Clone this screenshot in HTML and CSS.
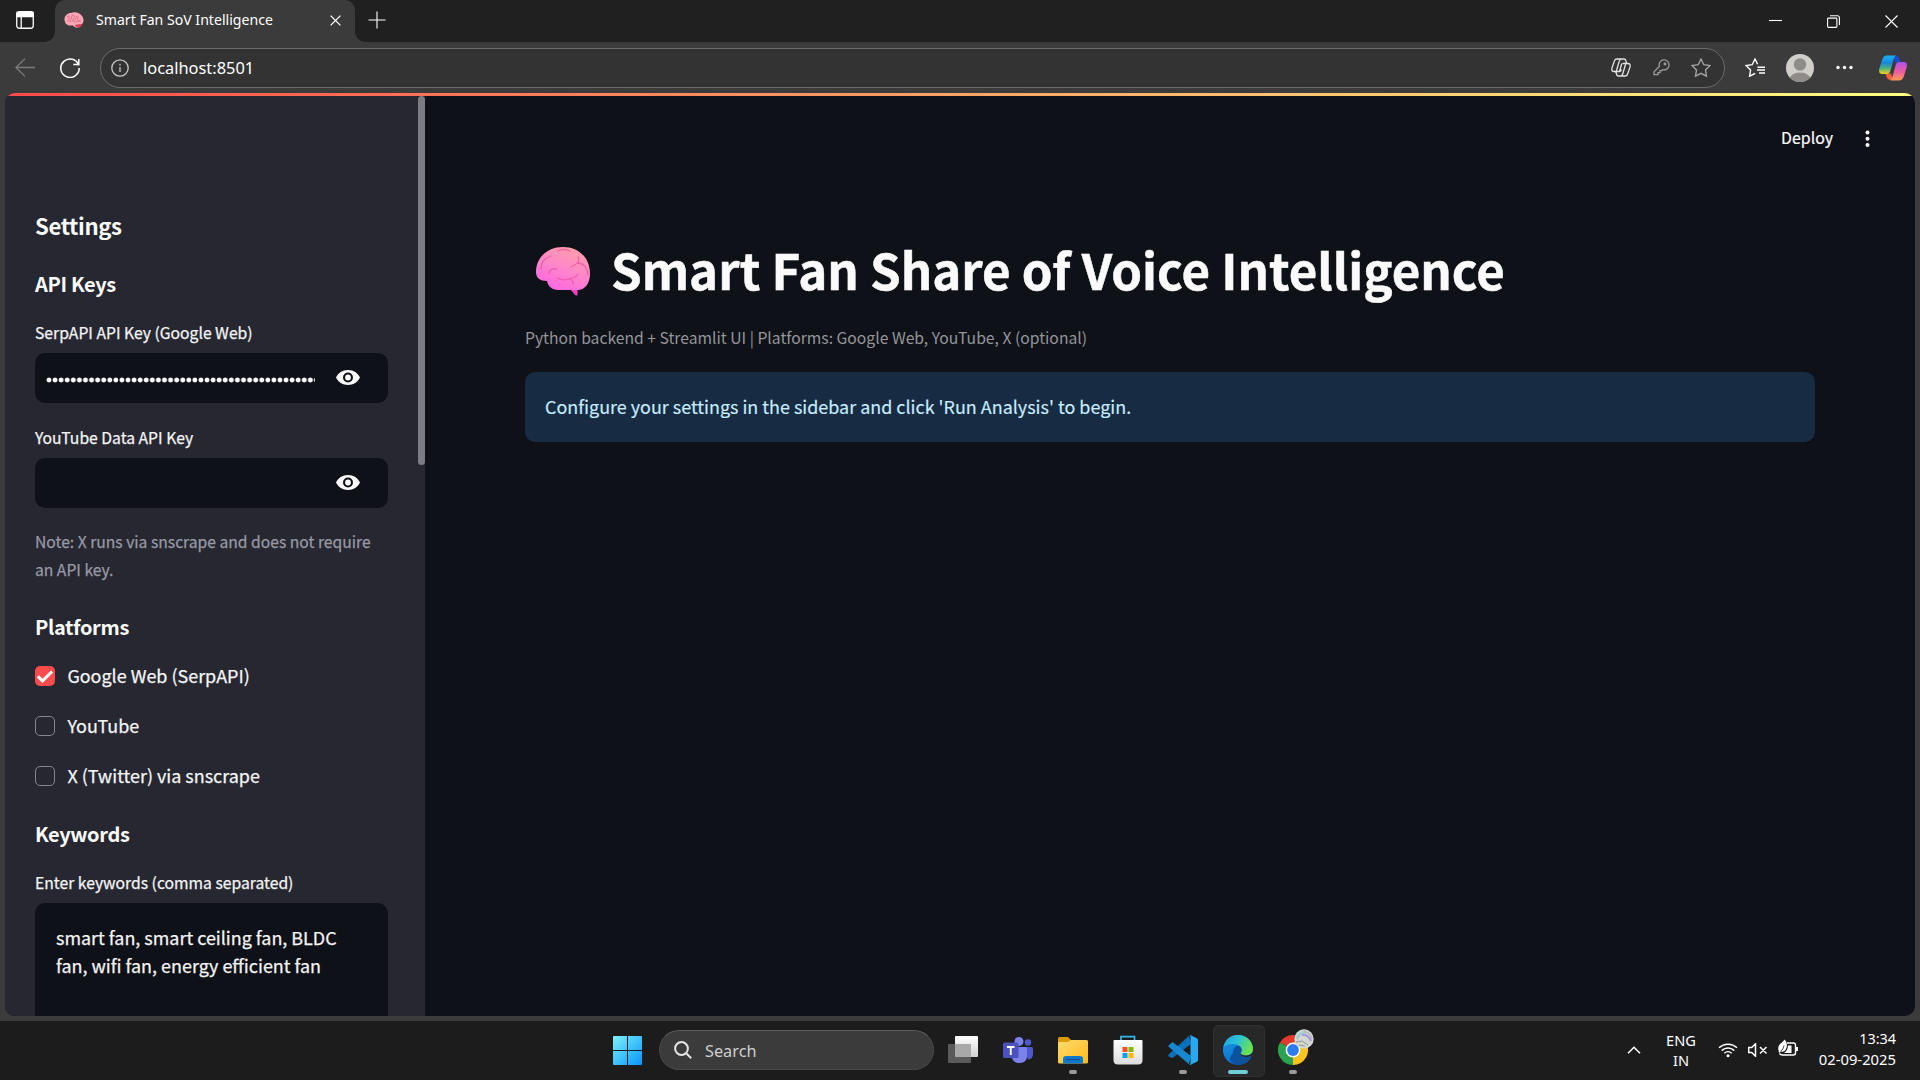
FILE: index.html
```html
<!DOCTYPE html>
<html lang="en">
<head>
<meta charset="utf-8">
<title>Smart Fan SoV Intelligence</title>
<link rel="stylesheet" href="styles.css">
</head>
<body>
<svg width="0" height="0" class="defs" aria-hidden="true">
  <defs>
    <linearGradient id="cpBlue" x1="0" y1="0" x2="0" y2="1"><stop offset="0" stop-color="#18b5f5"/><stop offset=".4" stop-color="#1687dc"/><stop offset=".7" stop-color="#4fb37a"/><stop offset="1" stop-color="#f7d11e"/></linearGradient>
    <linearGradient id="cpPink" x1="0" y1="0" x2="0" y2="1"><stop offset="0" stop-color="#a855f0"/><stop offset=".5" stop-color="#ec5aa0"/><stop offset="1" stop-color="#fb9a55"/></linearGradient>
    <linearGradient id="brain" x1=".8" y1="0" x2=".3" y2="1"><stop offset="0" stop-color="#ff9fa4"/><stop offset=".45" stop-color="#ff8ac6"/><stop offset="1" stop-color="#fb66e2"/></linearGradient>
    <linearGradient id="win" x1="0" y1="0" x2="1" y2="1"><stop offset="0" stop-color="#7ff0ff"/><stop offset=".5" stop-color="#40c4fb"/><stop offset="1" stop-color="#0a93fb"/></linearGradient>
    <linearGradient id="folder" x1="0" y1="0" x2="1" y2="1"><stop offset="0" stop-color="#ffdc70"/><stop offset="1" stop-color="#fdb919"/></linearGradient>
    <linearGradient id="bag" x1="0" y1="0" x2="0" y2="1"><stop offset="0" stop-color="#fff"/><stop offset="1" stop-color="#dcdcdc"/></linearGradient>
    <linearGradient id="edgeTop" x1="0" y1="0" x2="1" y2=".4"><stop offset="0" stop-color="#1a9fe6"/><stop offset=".5" stop-color="#2cc2d8"/><stop offset="1" stop-color="#6be14f"/></linearGradient>
    <linearGradient id="edgeSide" x1="0" y1="0" x2=".5" y2="1"><stop offset="0" stop-color="#1899e0"/><stop offset="1" stop-color="#0b6fd0"/></linearGradient>
    <linearGradient id="paneBack" x1="0" y1="0" x2="0" y2="1"><stop offset="0" stop-color="#fff"/><stop offset="1" stop-color="#d0d0d0"/></linearGradient>
  </defs>
</svg>
<div class="screen">
  <header class="tabstrip">
    <svg class="workspaces" viewBox="0 0 18 18"><rect x=".75" y=".75" width="16.5" height="16.5" rx="2.5"/><path d="M1 1.5h16v4H1z" fill="#fff"/><path d="M5.2 5v12"/></svg>
    <div class="tab">
      <svg class="favicon" viewBox="0 0 20 16"><path d="M1 10C-1 5 3 1 7 1c4-2 9 0 11 3 2 3 2 6 0 8-1 1-1 3-4 3.500-2 .5-4-.5-5-2-4 .5-7-.5-8-3.500z" fill="#f9a7b8"/><path d="M11 13c2-1 5-1 7-1-1 2-2 3.600-4 3.600-1.500 0-3-1-3-2.600z" fill="#dd4459"/><path d="M3 5c2-2 3 0 2 1s1 2 2 1 0-4 2-4 1 3 0 4 1 2 2 1 1-4 2.500-4 0 3 0 4 2 1 3 0M3 9c2-1 3 1 5 0s2 2 4 1 3-1 5 0" fill="none" stroke="#dc6b80" stroke-width=".9"/></svg>
      <span class="tab-title">Smart Fan SoV Intelligence</span>
      <svg class="close" viewBox="0 0 11 11"><path d="M.6.6l9.800 9.800M10.400.6L.6 10.400"/></svg>
    </div>
    <svg class="plus" viewBox="0 0 18 18"><path d="M9 .5v17M.5 9h17"/></svg>
    <div class="controls">
      <svg viewBox="0 0 13 13"><path d="M0 5.500h13"/></svg>
      <svg viewBox="0 0 13 13"><path d="M.6 4q0-.9.900-.9h7.500q.9 0 .9.900v7.500q0 .9-.9.900H1.500q-.9 0-.9-.9zM3 .7h7.400q2 0 2 2V10"/></svg>
      <svg viewBox="0 0 13 13"><path d="M.5.5l12 12M12.500.5l-12 12"/></svg>
    </div>
  </header>
  <nav class="toolbar">
    <svg class="back" viewBox="0 0 20 20"><path d="M20 9.500H.8M10 .8L.9 9.500l9.100 8.900"/></svg>
    <svg class="reload" viewBox="0 0 20 20"><path d="M18.800 7.500A9.200 9.200 0 1 0 19.200 10M18.800 1v5.500h-5.500"/></svg>
    <div class="address">
      <svg class="info" viewBox="0 0 18 18"><circle cx="9" cy="9" r="8.200"/><path d="M9 8v5M9 4.800v1.600"/></svg>
      <span class="url">localhost:8501</span>
      <svg class="cp-line" viewBox="0 0 20 19"><path d="M6 1h7q1.500 0 1.800 1.500L15.500 5M6 1Q4 1 3.500 2.700L1 9.800Q.3 13.500 3 13.500h2M9.500 1.500Q8.500 2 8 4L5.500 12.500q-.4 1.500-1.500 1.500M14 18H7.500q-1.500 0-1.800-1.500L5 14M14 18q2 0 2.500-1.700L19 9.200q.6-3.700-2-3.700h-2M10.500 17.500q1-.5 1.500-2.500l2.500-8.500q.4-1.500 1.500-1.500M8.500 13.500L10.800 5.500M5 13.500h3.500q1.500 0 2-2M15 5.500h-3.500"/></svg>
      <svg class="key" viewBox="0 0 17 17"><path d="M6.300 7.500A5 5 0 1 1 9.500 10.700L8.500 11.700H7v2H5v2H1v-3z"/><circle cx="12" cy="5" r=".8"/></svg>
      <svg class="star" viewBox="0 0 20 19"><path d="M10 1l2.800 5.700 6.200.9-4.500 4.400 1 6.200L10 15.300 4.500 18.200l1-6.200L1 7.600l6.200-.9z"/></svg>
    </div>
    <svg class="favs" viewBox="0 0 20 19"><path d="M10.200 15.400L4.600 18.200l1-6.200L1 7.600l6.200-.9L10 1l2.600 5.200M12.500 9.200H20M12 12h8M14 15h6" /></svg>
    <svg class="avatar" viewBox="0 0 28 28"><clipPath id="avc"><circle cx="14" cy="14" r="14"/></clipPath><g clip-path="url(#avc)"><path fill="#d0cecb" d="M0 0h28v28H0z"/><circle cx="14" cy="10.500" r="6.200" fill="#8f8b88"/><ellipse cx="14" cy="26" rx="11" ry="7.500" fill="#8f8b88"/></g></svg>
    <svg class="more" viewBox="0 0 17 5"><circle cx="2" cy="2.500" r="1.700"/><circle cx="8.500" cy="2.500" r="1.700"/><circle cx="15" cy="2.500" r="1.700"/></svg>
    <svg class="copilot" viewBox="0 0 28 26"><path d="M14 1h3q2.500 0 3.300 2.700L21.500 7.500H16z" fill="#1b4bcf"/><path d="M14 25h-3q-2.500 0-3.300-2.700L6.500 18.500H12z" fill="#f4613c"/><path d="M8 .5h9q-1.500.5-2.200 3L11.300 16q-.8 3-3.800 3H3.500Q-1 19 .4 13.500L3.200 4.500Q4.500.5 8 .5z" fill="url(#cpBlue)"/><path d="M20 25.500h-9q1.500-.5 2.200-3L16.700 10q.8-3 3.800-3h4q4.500 0 3.100 5.500l-2.800 9q-1.300 4-4.800 4z" fill="url(#cpPink)"/></svg>
  </nav>
  <div class="page">
    <div class="decoration"></div>
    <div class="app">
      <aside class="sidebar">
        <h2 class="settings">Settings</h2>
        <h3 class="api">API Keys</h3>
        <div class="label first">SerpAPI API Key (Google Web)</div>
        <div class="field"><span class="dots"></span><svg class="eye" viewBox="0 0 24 15"><path fill-rule="evenodd" d="M12 0C6.500 0 2 3.100 0 7.500 2 11.900 6.500 15 12 15s10-3.100 12-7.500C22 3.100 17.500 0 12 0zm0 12.500a5 5 0 1 1 0-10 5 5 0 0 1 0 10z"/><circle cx="12" cy="7.500" r="2.900"/></svg></div>
        <div class="label second">YouTube Data API Key</div>
        <div class="field"><svg class="eye" viewBox="0 0 24 15"><path fill-rule="evenodd" d="M12 0C6.500 0 2 3.100 0 7.500 2 11.900 6.500 15 12 15s10-3.100 12-7.500C22 3.100 17.500 0 12 0zm0 12.500a5 5 0 1 1 0-10 5 5 0 0 1 0 10z"/><circle cx="12" cy="7.500" r="2.900"/></svg></div>
        <p class="note">Note: X runs via snscrape and does not require<br>an API key.</p>
        <h3 class="platforms">Platforms</h3>
        <div class="check"><span class="box on"><svg viewBox="0 0 20 20"><path d="M2.800 10.300l4.800 4.600 9.400-9.400"/></svg></span><span>Google Web (SerpAPI)</span></div>
        <div class="check"><span class="box"></span><span>YouTube</span></div>
        <div class="check"><span class="box"></span><span>X (Twitter) via snscrape</span></div>
        <h3 class="keywords">Keywords</h3>
        <div class="label enter">Enter keywords (comma separated)</div>
        <div class="textarea">smart fan, smart ceiling fan, BLDC<br>fan, wifi fan, energy efficient fan</div>
        <div class="scrollbar"></div>
      </aside>
      <main class="main">
        <div class="actions"><span>Deploy</span><svg viewBox="0 0 5 18"><circle cx="2.500" cy="2.500" r="2"/><circle cx="2.500" cy="8.700" r="2"/><circle cx="2.500" cy="15" r="2"/></svg></div>
        <h1><svg class="brain" viewBox="0 0 54 49"><path d="M34 42h7.500v6.500c-2 .5-3-1-4-2.500z" fill="#ff3fc4"/><path d="M27 0C12 0 0 10 0 25c0 6 4 9 11 9 1 5 5 9 11 9h20c7 0 12-7 12-16C54 10 42 0 27 0z" fill="url(#brain)"/><path d="M5 22C5 15 9 11 15 9M22 4q6-3 12 0M13 27q0-6 8-5M42 10q3 6-7 10M41 16q10 0 11 12M21 31q6 3 12 1 7-1 9-5M34 32q4 2 3 5" fill="none" stroke="#e8559f" stroke-width="1.300" stroke-linecap="round" opacity=".75"/></svg><span>Smart Fan Share of Voice Intelligence</span></h1>
        <p class="caption">Python backend + Streamlit UI | Platforms: Google Web, YouTube, X (optional)</p>
        <div class="alert">Configure your settings in the sidebar and click 'Run Analysis' to begin.</div>
      </main>
    </div>
  </div>
  <footer class="taskbar">
    <div class="cell"><svg class="i29" viewBox="0 0 29 29"><path fill="url(#win)" d="M1 0h13v14H0V1q0-1 1-1zM15 0h13q1 0 1 1v13H15zM0 15h14v14H1q-1 0-1-1zM15 15h14v13q0 1-1 1H15z"/></svg></div>
    <div class="search"><svg viewBox="0 0 18 18"><circle cx="7.500" cy="7.500" r="6.400"/><path d="M12.200 12.200l5 5"/></svg><span>Search</span></div>
    <div class="cell"><svg class="i30" viewBox="0 0 30 30"><rect x="7" y="1" width="23" height="21" rx="1" fill="url(#paneBack)"/><rect x="0" y="9" width="23" height="19" rx="1" fill="#5a5a5a"/><path d="M7 9h16v13H8q-1 0-1-1z" fill="#a9a9a9"/></svg></div>
    <div class="cell"><svg class="i30" viewBox="0 0 30 30"><circle cx="16" cy="6.500" r="4.500" fill="#7b83eb"/><circle cx="25" cy="7.500" r="3.200" fill="#5059c9"/><path d="M20 12h8.500q1.500 0 1.500 1.500V19q0 5-5 5.500z" fill="#5059c9"/><path d="M9 12h13.500q1.500 0 1.500 1.500V21q0 7-7.500 7T9 21z" fill="#7b83eb"/><rect x="0" y="7.500" width="15.500" height="15.500" rx="1.500" fill="#4a53bd"/><path d="M4 12h7.500M7.750 12v8" stroke="#fff" stroke-width="1.900"/></svg></div>
    <div class="cell run"><svg class="i30" viewBox="0 0 30 30"><path d="M0 10V3.500Q0 2 1.500 2H10l3 3v6z" fill="#dc9a07"/><path d="M0 7h9.500L13 5h15.500Q30 5 30 6.500V27q0 1.500-1.500 1.500h-27Q0 28.500 0 27z" fill="url(#folder)"/><path d="M5 28.500V24q0-3 3-3h14q3 0 3 3v4.500z" fill="#0f79cb"/><path d="M8 24.500h14" stroke="#0a4f92" stroke-width="1.200"/></svg></div>
    <div class="cell"><svg class="i30" viewBox="0 0 30 30"><path d="M8 7V1.700h13.500V7" fill="none" stroke="#2fb9ec" stroke-width="1.700"/><path d="M.5 6q0-1 1-1h27q1 0 1 1v19q0 4.500-4.500 4.500H5Q.5 29.500.5 25z" fill="url(#bag)"/><path fill="#f25022" d="M9.500 12h5v5h-5z"/><path fill="#7fba00" d="M15.500 12h5v5h-5z"/><path fill="#00a4ef" d="M9.500 18h5v5h-5z"/><path fill="#ffb900" d="M15.500 18h5v5h-5z"/></svg></div>
    <div class="cell run"><svg class="i30" viewBox="0 0 30 30"><path d="M.6 19.500L21 .8l2 8.200L4.500 23 .8 21.500q-1-1-.2-2z" fill="#0b70b8"/><path d="M.6 10.500L4.500 7 23 21l-2 8.200L.6 11.800q-.5-.7 0-1.300z" fill="#1787d0"/><path d="M21 .3q.7-.5 1.800 0l6 2.900q1.200.6 1.200 2v19.600q0 1.400-1.200 2l-6 2.900q-1 .5-1.800-.3 1.500.5 1.500-1.400V2q0-2-1.500-1.700z" fill="#29a9f1"/></svg></div>
    <div class="cell active"><svg class="i30" viewBox="0 0 30 30"><circle cx="15" cy="15" r="15" fill="url(#edgeSide)"/><path d="M10 18c0-6 5-9 8-6 2 2 0 4-.5 6 0 3 4 4.500 8 3.500 1.500-.4 3 0 2 1.500-3 5-8 7-12 7-9-1-11-7-5.500-12z" fill="#0d529c"/><path d="M.3 12.500C2 4 8 0 15 0c9 0 15 7 15 13.500 0 5-4 7-7.500 7-3.500 0-5.500-1.500-4.500-2.500 3-4-1-9-7.500-9C5 9 2 10.500.3 12.500z" fill="url(#edgeTop)"/><path d="M17.500 18.500c0 3 4 4.500 9 3 2-.6 2.500.5 1.500 2l2-1V17c-2 3-4.500 3.600-7.500 3.500-2 0-4-.8-5-2z" fill="#282828"/></svg></div>
    <div class="cell run"><svg class="chrome" viewBox="0 0 36 36"><path d="M15 21L2 13.500A15 15 0 0 1 28 13.500z" fill="#e23b2e"/><path d="M15 21L2 13.500A15 15 0 0 0 15 36l6.500-11.300z" fill="#2ba24c"/><path d="M15 21l0 15A15 15 0 0 0 28 13.500H15z" fill="#fcc31e"/><circle cx="15" cy="21" r="7.400" fill="#fff"/><circle cx="15" cy="21" r="5.900" fill="#2f7bf0"/><circle cx="26" cy="10" r="9.700" fill="#d3d8d2"/><path d="M18 8q3-6 9-6.500l1 3q-6 1-9 7z" fill="#9fd0cf"/><path d="M24 6q6-1 9 6" fill="none" stroke="#a99be0" stroke-width="2.400"/><path d="M26 2.500q6 1 8 7" fill="none" stroke="#b9b0bd" stroke-width="1.500"/><path d="M18 13l6-1 6 4M21 16l6 1" fill="none" stroke="#8d9a90" stroke-width="1"/></svg></div>
    <div class="tray">
      <svg class="up" viewBox="0 0 14 8"><path d="M1 7.200l6-6 6 6"/></svg>
      <div class="lang"><span>ENG</span><span>IN</span></div>
      <svg class="wifi" viewBox="0 0 20 16"><path d="M1 5.800a13 13 0 0 1 18 0M3.700 8.600a9 9 0 0 1 12.600 0M6.400 11.300a5.200 5.200 0 0 1 7.200 0"/><circle cx="10" cy="13.700" r="1.500"/></svg>
      <svg class="mute" viewBox="0 0 20 14"><path d="M.7 4.500h3L7.500.8v12.400L3.700 9.500h-3zM12 4l6.500 6.500M18.500 4L12 10.500"/></svg>
      <svg class="battery" viewBox="0 0 20 18"><path d="M9 4h6.500q2 0 2 2v8q0 2-2 2H4.500q-2 0-3-1.500" fill="none" stroke="#fff" stroke-width="1.400"/><path d="M18 8h2v4h-2zM10 6.500h3.500v7.500H6q4-3 4-7.500zM.5 11C-1 5 5 4 6.500.5 9.500 3 10 9 6.500 12q-2 1-3.500.5L1.500 14 .8 13z" fill="#fff"/><path d="M2.500 12.500q3-2 3.500-6" fill="none" stroke="#1c1c1c" stroke-width=".8"/></svg>
      <div class="clock"><span class="time">13:34</span><span class="date">02-09-2025</span></div>
    </div>
  </footer>
</div>
</body>
</html>
```
FILE: styles.css
```css
* { box-sizing: border-box; }
body { margin: 0; overflow: hidden; background: #1c1c1c; color: #fff; font-family: "Noto Sans", "Open Sans", sans-serif; }
svg { display: block; flex: none; fill: none; }
.defs { position: absolute; }
h1, h2, h3, p { margin: 0; }
.screen { width: 1920px; height: 1080px; display: flex; flex-direction: column; background: #3b3b3b; }

/* Tab strip */
.tabstrip { height: 42px; flex: none; display: flex; background: #202020; }
.workspaces { width: 18px; height: 18px; margin: 11px 21px 0 16px; stroke: #fff; stroke-width: 1.3; }
.tab { position: relative; width: 300px; height: 42px; border-radius: 10px 10px 0 0; background: #3b3b3b; display: flex; align-items: flex-start; padding-left: 9px; }
.tab::before, .tab::after { content: ""; position: absolute; bottom: 0; width: 10px; height: 10px; }
.tab::before { left: -10px; background: radial-gradient(circle at 0 0, #202020 9.5px, #3b3b3b 10px); }
.tab::after { right: -10px; background: radial-gradient(circle at 100% 0, #202020 9.5px, #3b3b3b 10px); }
.favicon { width: 20px; height: 16px; margin: 12px 12px 0 0; }
.tab-title { width: 234px; font-size: 14.1px; line-height: 20px; margin-top: 10px; white-space: nowrap; }
.close { width: 11px; height: 11px; margin-top: 15px; stroke: #fff; stroke-width: 1.3; }
.plus { width: 18px; height: 18px; margin: 11px 0 0 13px; stroke: #fff; stroke-width: 1.1; }
.controls { margin: 15px 22px 0 auto; display: flex; gap: 45px; }
.controls svg { width: 13px; height: 13px; stroke: #fff; stroke-width: 1.1; }

/* Toolbar */
.toolbar { height: 51px; flex: none; display: flex; align-items: center; background: #3b3b3b; padding: 0 13px 0 15px; }
.back { width: 20px; height: 20px; stroke: #7b7b7b; stroke-width: 1.3; }
.reload { width: 20px; height: 20px; margin: 0 20px 0 25px; stroke: #fff; stroke-width: 1.5; }
.address { width: 1625px; height: 40px; border: 1px solid #6c6c6c; border-radius: 20px; background: #333; display: flex; align-items: center; padding: 0 13px 0 10px; }
.info { width: 18px; height: 18px; margin-right: 14px; stroke: #c8c8c8; stroke-width: 1.3; }
.url { flex: 1; font-size: 16.4px; line-height: 24px; }
.cp-line { width: 20px; height: 19px; stroke: #e4e4e4; stroke-width: 1.3; margin-right: 22px; }
.key { width: 17px; height: 17px; stroke: #9c9c9c; stroke-width: 1.3; margin-right: 21px; }
.star { width: 20px; height: 19px; stroke: #a2a2a2; stroke-width: 1.4; }
.favs { width: 20px; height: 19px; stroke: #fff; stroke-width: 1.4; margin-left: 20px; }
.avatar { width: 28px; height: 28px; margin-left: 21px; }
.more { width: 17px; height: 5px; fill: #fff; margin-left: 22px; }
.copilot { width: 28px; height: 26px; margin-left: auto; }

/* Page */
.page { height: 923px; margin: 0 5px 5px; flex: none; border-radius: 10px; overflow: hidden; display: flex; flex-direction: column; background: #0e1117; font-family: "Noto Sans CJK SC", sans-serif; color: #fafafa; }
.decoration { height: 3px; flex: none; background: linear-gradient(90deg, #ff4b4b, #fffd80); }
.app { flex: 1; min-height: 0; display: flex; }
.sidebar { position: relative; width: 420px; flex: none; background: #262730; padding: 114px 37px 0 30px; overflow: hidden; -webkit-text-stroke: .25px currentColor; }
.scrollbar { position: absolute; top: 0; right: 0; width: 7px; height: 369px; border-radius: 3.5px; background: #7e7c82; }
.settings { font-size: 22.2px; line-height: 30px; letter-spacing: -.4px; font-weight: 700; -webkit-text-stroke: 0; }
h3 { font-size: 20px; line-height: 27px; letter-spacing: -.35px; font-weight: 700; -webkit-text-stroke: 0; }
.api { margin-top: 30px; }
.label { font-size: 15.7px; line-height: 24px; height: 24px; white-space: nowrap; color: #f4f4f5; }
.first { margin-top: 24px; }
.second { margin-top: 23px; }
.field { height: 50px; margin-top: 8px; border-radius: 10px; background: #0e1117; display: flex; align-items: center; padding: 0 28.5px 0 11px; }
.dots { width: 269px; height: 6px; margin-top: 3px; background: radial-gradient(circle at 3px 3px, #fafafa 2.1px, transparent 2.8px) 0 0 / 6.08px 6px repeat-x; }
.eye { width: 24px; height: 15px; margin-left: auto; margin-top: -1px; fill: #fafafa; }
.note { margin-top: 20px; font-size: 15.67px; line-height: 28px; white-space: nowrap; color: #9899a5; }
.platforms { margin: 29px 0 11px; }
.check { height: 50px; display: flex; align-items: center; gap: 12.4px; font-size: 17.95px; line-height: 26px; color: #f4f4f5; white-space: nowrap; }
.check span:last-child { margin-top: -2px; }
.box { width: 20px; height: 20px; border-radius: 5px; border: 1px solid #85868d; }
.box.on { border: 0; background: #ff4b4b; }
.box svg { stroke: #fff; stroke-width: 3; }
.keywords { margin-top: 19px; }
.enter { margin-top: 24px; }
.textarea { height: 160px; margin-top: 8px; border-radius: 10px; background: #0e1117; padding: 20px 21px; font-size: 17.94px; line-height: 28px; white-space: nowrap; color: #f4f4f5; }

.main { flex: 1; padding: 26px 100px 0; }
.actions { height: 34px; margin-right: -58px; display: flex; align-items: center; justify-content: flex-end; font-size: 15.9px; line-height: 24px; -webkit-text-stroke: .2px currentColor; }
.actions span { margin-top: -2px; }
.actions svg { width: 5px; height: 18px; margin-left: 32px; margin-right: 3px; fill: #fff; }
h1 { margin-top: 78px; height: 70px; display: flex; align-items: center; font-size: 49.2px; line-height: 70px; font-weight: 700; white-space: nowrap; -webkit-text-stroke: .5px currentColor; }
.brain { width: 54px; height: 49px; margin: 5px 21px 0 11px; }
.caption { margin-top: 20px; font-size: 15.69px; line-height: 28px; color: #94969a; }
.alert { margin-top: 20px; height: 70px; border-radius: 10px; background: #172c43; color: #c7ebff; padding: 20px; font-size: 17.94px; line-height: 28px; -webkit-text-stroke: .15px currentColor; }

/* Taskbar */
.taskbar { height: 59px; flex: none; display: flex; background: #1c1c1c; padding-left: 600px; }
.cell { position: relative; width: 55px; height: 59px; display: flex; align-items: center; justify-content: center; }
.i29 { width: 29px; height: 29px; }
.i30 { width: 30px; height: 30px; margin-top: -1px; }
.chrome { width: 36px; height: 36px; margin: -7px 0 0 6px; }
.run::after, .active::after { content: ""; position: absolute; top: 49px; left: 23.5px; width: 8px; height: 4px; border-radius: 2px; background: #9a9a9a; }
.active::after { left: 17.5px; width: 20px; background: #6fcfd5; }
.active::before { content: ""; position: absolute; left: 2.5px; top: 4px; width: 50px; height: 50px; border-radius: 5px; background: #282828; border: 1px solid #303030; }
.active svg { position: relative; }
.search { width: 275px; height: 40px; margin: 9px 1.5px 0 4px; border-radius: 20px; background: #3b3b3b; border: 1px solid #484848; border-top-color: #5c5c5c; display: flex; align-items: center; padding-left: 14px; gap: 13px; font-size: 16.3px; line-height: 24px; color: #cfcfcf; }
.search span { margin-top: 2px; }
.search svg { width: 18px; height: 18px; stroke: #e6e6e6; stroke-width: 2; }
.tray { margin-left: auto; display: flex; align-items: center; padding: 0 24px 2px 0; }
.tray svg { stroke: #fff; stroke-width: 1.5; }
.up { width: 14px; height: 8px; margin-right: 21px; }
.lang { width: 38px; height: 40px; display: flex; flex-direction: column; align-items: center; font-size: 14.6px; line-height: 20px; }
.wifi { width: 20px; height: 16px; margin-left: 18px; }
.wifi circle { fill: #fff; stroke: none; }
.mute { width: 20px; height: 14px; margin-left: 10px; }
.tray .battery { width: 20px; height: 18px; margin: -3px 0 0 10px; stroke: none; }
.clock { width: 98px; height: 40px; margin-top: -1px; display: flex; flex-direction: column; align-items: flex-end; font-size: 14.4px; line-height: 20px; }
.date { font-size: 14.8px; }
```
